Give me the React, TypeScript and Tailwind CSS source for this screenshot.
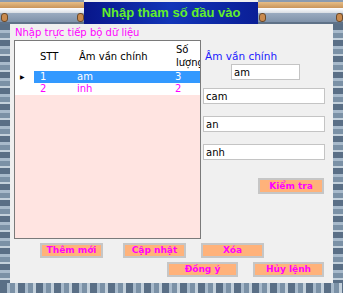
const font = "font-['DejaVu_Sans',sans-serif]";

function Bolt() {
  return <div className="h-[9px] w-[7px] rounded-[3px] border border-[#6b4a2a] bg-[#c98a4e]" />;
}

function Decor({ w }: { w: string }) {
  return (
    <div className={`${w} relative flex h-full flex-col`}>
      <div className="h-[2px] bg-[#8a9bb0]" />
      <div className="h-[6px] bg-[linear-gradient(180deg,#e6bd86,#c9955a)]" />
      <div className="h-[5px] bg-[linear-gradient(180deg,#ffffff,#d8dde4)]" />
      <div className="h-[9px] bg-[linear-gradient(180deg,#9aabc0,#7f92aa)]" />
      <div className="h-[2px] bg-[#5f7288]" />
      <div className="absolute left-[1px] top-[13px]">
        <Bolt />
      </div>
      <div className="absolute right-[0px] top-[13px]">
        <Bolt />
      </div>
    </div>
  );
}

function Btn({ label, w }: { label: string; w: string }) {
  return (
    <div
      className={`${w} flex h-[15px] items-center justify-center whitespace-nowrap border-2 border-[#c6c6c6] bg-[#ffb27a] text-[9px] font-bold leading-none text-[#ff00ff]`}
    >
      {label}
    </div>
  );
}

function Field({ value, cls }: { value: string; cls: string }) {
  return (
    <div className={`${cls} flex h-[16px] items-center border border-[#c4c4c4] bg-white pl-[2px] text-[10px] text-black`}>
      {value}
    </div>
  );
}

const rows = [
  { stt: "1", am: "am", sl: "3", sel: true },
  { stt: "2", am: "inh", sl: "2", sel: false },
];

const checker =
  "bg-[repeating-linear-gradient(180deg,#5a6f86_0px,#5a6f86_6px,#a8bacb_6px,#a8bacb_9px,#7b91a6_9px,#7b91a6_14px,#c3d0db_14px,#c3d0db_16px)]";
const checkerH =
  "bg-[repeating-linear-gradient(90deg,#5a6f86_0px,#5a6f86_7px,#a8bacb_7px,#a8bacb_10px,#7b91a6_10px,#7b91a6_15px,#c3d0db_15px,#c3d0db_18px)]";

export default function App() {
  return (
    <div className={`${font} flex h-[293px] w-[343px] flex-col overflow-hidden bg-[#f0f0f0]`}>
      <div className="flex h-[24px]">
        <Decor w="w-[84px]" />
        <div className="mt-[2px] flex h-[22px] w-[174px] items-center justify-center whitespace-nowrap bg-[linear-gradient(90deg,#08168a,#1235b8_50%,#0a1e96)] font-['Liberation_Sans',sans-serif] text-[13px] font-bold text-[#62ef2c]">
          Nhập tham số đầu vào
        </div>
        <Decor w="w-[85px]" />
      </div>
      <div className="flex flex-1">
        <div className={`w-[10px] ${checker}`} />
        <div className="flex flex-1 flex-col pl-[4px]">
          <div className="flex">
            <div className="flex w-[187px] flex-col">
              <div className="flex h-[16px] items-center pl-[1px] text-[10px] text-[#ff00ff]">Nhập trực tiếp bộ dữ liệu</div>
              <div className="flex h-[199px] flex-col border border-[#7a7a7a] bg-[#ffe4e1] text-[10px]">
                <div className="grid h-[30px] grid-cols-[19px_40px_98px_1fr] bg-white text-black">
                  <div />
                  <div className="flex items-center pl-[6px]">STT</div>
                  <div className="flex items-center pl-[5px]">Âm vần chính</div>
                  <div className="flex flex-col justify-center overflow-hidden whitespace-nowrap pl-[4px] leading-[13px]">
                    <span>Số</span>
                    <span>lượng</span>
                  </div>
                </div>
                {rows.map((r) => (
                  <div
                    key={r.stt}
                    className={`grid h-[12px] grid-cols-[19px_40px_98px_1fr] leading-[12px] ${r.sel ? "bg-[#3399ff] text-white" : "bg-white text-[#ff00ff]"}`}
                  >
                    <div className="flex items-center bg-white pl-[5px]">
                      {r.sel && <span className="text-[6px] leading-none text-black">▶</span>}
                    </div>
                    <div className="pl-[6px]">{r.stt}</div>
                    <div className="pl-[3px]">{r.am}</div>
                    <div className="pl-[3px]">{r.sl}</div>
                  </div>
                ))}
              </div>
            </div>
            <div className="ml-[2px] flex w-[122px] flex-col">
              <div className="mt-[26px] h-[13px] pl-[2px] text-[10.5px] leading-[13px] text-[#1a1aff]">Âm vần chính</div>
              <Field value="am" cls="ml-[28px] mt-[1px] w-[69px]" />
              <Field value="cam" cls="mt-[8px] w-[122px]" />
              <Field value="an" cls="mt-[12px] w-[122px]" />
              <Field value="anh" cls="mt-[12px] w-[122px]" />
              <div className="mt-[18px] flex justify-end pr-[1px]">
                <Btn label="Kiểm tra" w="w-[66px] h-[16px]" />
              </div>
            </div>
          </div>
          <div className="mt-[4px] flex">
            <div className="ml-[26px]">
              <Btn label="Thêm mới" w="w-[63px]" />
            </div>
            <div className="ml-[20px]">
              <Btn label="Cập nhật" w="w-[63px]" />
            </div>
            <div className="ml-[15px]">
              <Btn label="Xóa" w="w-[63px]" />
            </div>
          </div>
          <div className="mt-[4px] flex">
            <div className="ml-[153px]">
              <Btn label="Đồng ý" w="w-[71px]" />
            </div>
            <div className="ml-[15px]">
              <Btn label="Hủy lệnh" w="w-[71px]" />
            </div>
          </div>
        </div>
        <div className={`w-[10px] ${checker}`} />
      </div>
      <div className={`h-[10px] ${checkerH}`} />
    </div>
  );
}
